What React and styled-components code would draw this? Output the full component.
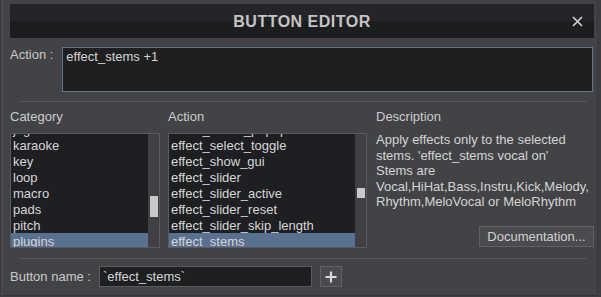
import React from "react";
import styled, { createGlobalStyle } from "styled-components";

const categories = ["jog", "karaoke", "key", "loop", "macro", "pads", "pitch", "plugins"];
const actions = [
  "effect_select_popup",
  "effect_select_toggle",
  "effect_show_gui",
  "effect_slider",
  "effect_slider_active",
  "effect_slider_reset",
  "effect_slider_skip_length",
  "effect_stems",
];

const GlobalStyle = createGlobalStyle`
  html, body {
    margin: 0;
    padding: 0;
    background: #3d3e41;
  }
  body {
    font-family: "Liberation Sans", Arial, sans-serif;
    font-size: 13px;
    color: #cfcfcf;
  }
`;

const CloseIcon = () => (
  <svg width="11" height="11" viewBox="0 0 11 11">
    <path d="M1 1 L10 10 M10 1 L1 10" stroke="#d4d4d4" strokeWidth="1.6" />
  </svg>
);

const PlusIcon = () => (
  <svg width="12" height="12" viewBox="0 0 12 12">
    <path d="M6 0.5 V11.5 M0.5 6 H11.5" stroke="#d8d8d8" strokeWidth="2.2" />
  </svg>
);

const ListBox = ({ items, selected, offset, thumbTop, thumbHeight }) => (
  <List>
    <Rows>
      <RowsInner style={{ marginTop: offset }}>
        {items.map((item) => (
          <Row key={item} $active={item === selected}>
            {item}
          </Row>
        ))}
      </RowsInner>
    </Rows>
    <Track>
      <Thumb style={{ marginTop: thumbTop, height: thumbHeight }} />
    </Track>
  </List>
);

const App = () => {
  return (
    <>
      <GlobalStyle />
      <Window>
        <TitleBar>
          <Title>BUTTON EDITOR</Title>
          <Close>
            <CloseIcon />
          </Close>
        </TitleBar>

        <ActionRow>
          <Label>Action :</Label>
          <ActionField>effect_stems +1</ActionField>
        </ActionRow>

        <Divider $top={9} />

        <Columns>
          <Column>
            <Header>Category</Header>
            <ListBox
              items={categories}
              selected="plugins"
              offset={-13}
              thumbTop={62}
              thumbHeight={21}
            />
          </Column>
          <Column>
            <Header>Action</Header>
            <ListBox
              items={actions}
              selected="effect_stems"
              offset={-13}
              thumbTop={54}
              thumbHeight={10}
            />
          </Column>
          <Column>
            <Header>Description</Header>
            <Description>
              Apply effects only to the selected
              <br />
              stems. 'effect_stems vocal on'
              <br />
              Stems are
              <br />
              Vocal,HiHat,Bass,Instru,Kick,Melody,
              <br />
              Rhythm,MeloVocal or MeloRhythm
            </Description>
            <DocButton>Documentation...</DocButton>
          </Column>
        </Columns>

        <Divider $top={10} />

        <NameRow>
          <Label>Button name :</Label>
          <NameField>`effect_stems`</NameField>
          <PlusButton>
            <PlusIcon />
          </PlusButton>
        </NameRow>
      </Window>
    </>
  );
};

const Window = styled.div`
  box-sizing: border-box;
  margin-left: 2px;
  width: 596px;
  height: 296px;
  padding: 4px 3px 0 7px;
  background: #424346;
  border-left: 1px solid #505154;
  border-right: 1px solid #37383b;
  border-bottom: 1px solid #333437;
  display: flex;
  flex-direction: column;
`;

const TitleBar = styled.div`
  height: 34px;
  display: flex;
  align-items: center;
  justify-content: center;
  position: relative;
  background: linear-gradient(#242528 0%, #242528 50%, #1c1d1f 50%, #1c1d1f 100%);
`;

const Title = styled.div`
  font-weight: bold;
  font-size: 16px;
  letter-spacing: 0.5px;
  margin-top: 1px;
  color: #c4c4c4;
`;

const Close = styled.div`
  position: absolute;
  right: 11px;
  top: 12px;
  display: flex;
`;

const ActionRow = styled.div`
  margin-top: 9px;
  display: flex;
  align-items: flex-start;
`;

const Label = styled.div`
  line-height: 16px;
  color: #c9c9c9;
  white-space: nowrap;
`;

const ActionField = styled.div`
  box-sizing: border-box;
  margin-left: 9px;
  margin-right: 1px;
  flex: 1;
  height: 45px;
  padding: 1px 3px;
  line-height: 16px;
  background: #1e1f21;
  border: 1px solid #65748a;
  color: #d6d6d6;
`;

const Divider = styled.div`
  margin: ${(p) => p.$top || 8}px 7px 0 8px;
  height: 1px;
  background: #55565a;
`;

const Columns = styled.div`
  margin-top: 7px;
  display: grid;
  grid-template-columns: 150px 199px 1fr;
  column-gap: 8px;
  & > :nth-child(3) {
    margin-left: 1px;
  }
`;

const Column = styled.div`
  display: flex;
  flex-direction: column;
`;

const Header = styled.div`
  line-height: 16px;
  margin-bottom: 8px;
  color: #cbcbcb;
`;

const List = styled.div`
  box-sizing: border-box;
  height: 115px;
  display: flex;
  border: 1px solid #5a5b5f;
  background: #1e1f22;
`;

const Rows = styled.div`
  flex: 1;
  overflow: hidden;
`;

const RowsInner = styled.div`
  display: flex;
  flex-direction: column;
`;

const Row = styled.div`
  height: 16px;
  line-height: 18px;
  padding-left: 2px;
  white-space: nowrap;
  color: #d6d6d6;
  background: ${(p) => (p.$active ? "#5a7091" : "transparent")};
`;

const Track = styled.div`
  width: 11px;
  background: #3f4043;
  display: flex;
  justify-content: center;
  align-items: flex-start;
`;

const Thumb = styled.div`
  width: 8px;
  background: #c9c9c9;
`;

const Description = styled.div`
  line-height: 15.5px;
  margin-top: -1px;
  color: #d4d4d4;
  white-space: nowrap;
`;

const DocButton = styled.div`
  box-sizing: border-box;
  align-self: flex-end;
  margin-top: 16px;
  width: 115px;
  height: 21px;
  line-height: 19px;
  text-align: center;
  background: #4a4b4e;
  border: 1px solid #606165;
  color: #d2d2d2;
`;

const NameRow = styled.div`
  margin-top: 7px;
  display: flex;
  align-items: center;
`;

const NameField = styled.div`
  box-sizing: border-box;
  margin-left: 8px;
  width: 213px;
  height: 21px;
  line-height: 19px;
  padding-left: 3px;
  background: #1e1f21;
  border: 1px solid #5a5b5f;
  color: #d6d6d6;
`;

const PlusButton = styled.div`
  box-sizing: border-box;
  margin-left: 8px;
  width: 22px;
  height: 21px;
  display: flex;
  align-items: center;
  justify-content: center;
  background: #4a4b4e;
  border: 1px solid #606165;
`;

export default App;
